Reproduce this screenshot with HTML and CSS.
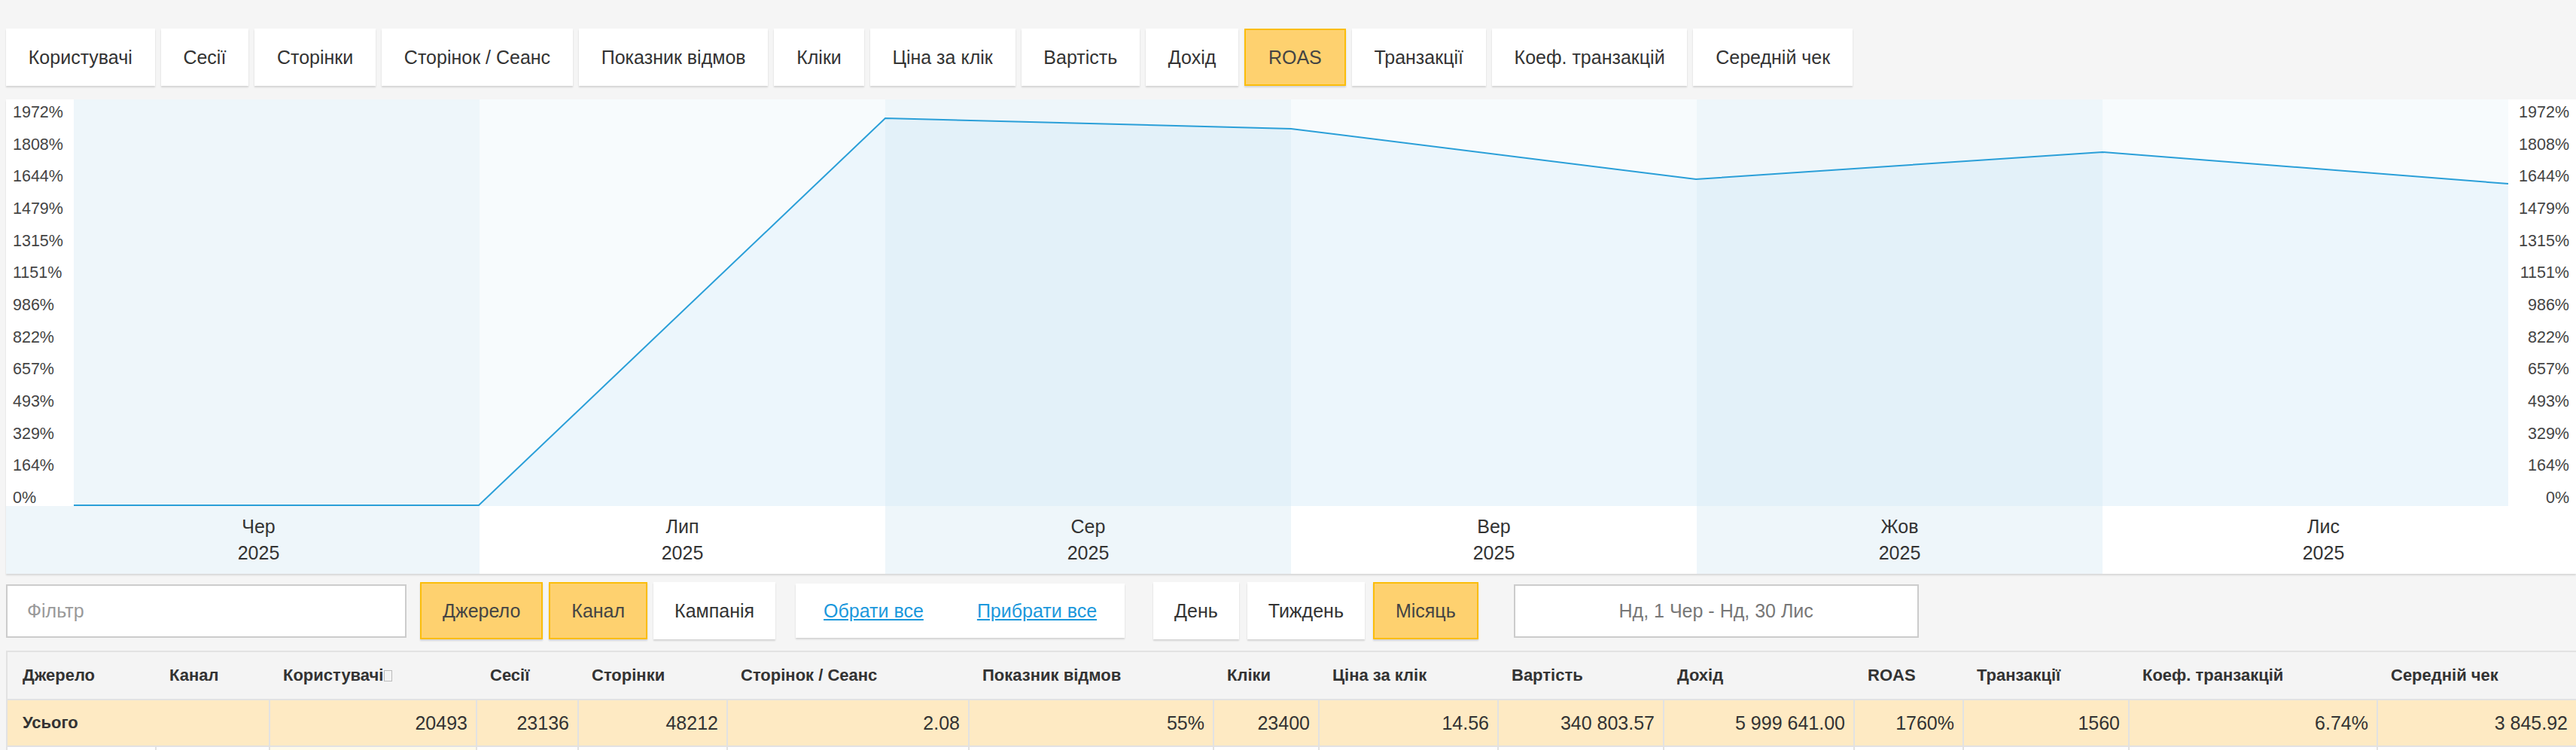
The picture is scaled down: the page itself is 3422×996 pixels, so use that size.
FILE: index.html
```html
<!DOCTYPE html>
<html lang="uk">
<head>
    <meta charset="UTF-8">
    <meta name="viewport" content="width=device-width, initial-scale=1.0">
    <title>Звіт по джерелах</title>
    <link rel="stylesheet" href="styles.css">
</head>
<body>

    <!-- Metric tabs -->
    <div class="metric-tabs">
        <button class="tab">Користувачі</button>
        <button class="tab">Сесії</button>
        <button class="tab">Сторінки</button>
        <button class="tab">Сторінок / Сеанс</button>
        <button class="tab">Показник відмов</button>
        <button class="tab">Кліки</button>
        <button class="tab">Ціна за клік</button>
        <button class="tab">Вартість</button>
        <button class="tab">Дохід</button>
        <button class="tab active">ROAS</button>
        <button class="tab">Транзакції</button>
        <button class="tab">Коеф. транзакцій</button>
        <button class="tab">Середній чек</button>
    </div>

    <!-- Chart -->
    <div class="chart">
        <div class="axis axis-left">
            <span>1972%</span><span>1808%</span><span>1644%</span><span>1479%</span><span>1315%</span>
            <span>1151%</span><span>986%</span><span>822%</span><span>657%</span><span>493%</span>
            <span>329%</span><span>164%</span><span>0%</span>
        </div>
        <div class="band odd col-1"></div>
        <div class="band col-2"></div>
        <div class="band odd col-3"></div>
        <div class="band col-4"></div>
        <div class="band odd col-5"></div>
        <div class="band col-6"></div>
        <svg class="plot-line" viewBox="0 0 3234 540" preserveAspectRatio="none">
            <polygon points="0,540 538,540 1078,25 1617,39 2155,106 2695,70 3234,112 3234,540" fill="rgba(0,150,230,0.045)"/>
            <polyline points="0,539 538,539 1078,25 1617,39 2155,106 2695,70 3234,112" fill="none" stroke="#2a9fd8" stroke-width="2" vector-effect="non-scaling-stroke"/>
        </svg>
        <div class="axis axis-right">
            <span>1972%</span><span>1808%</span><span>1644%</span><span>1479%</span><span>1315%</span>
            <span>1151%</span><span>986%</span><span>822%</span><span>657%</span><span>493%</span>
            <span>329%</span><span>164%</span><span>0%</span>
        </div>

        <div class="x-label first odd">Чер<br>2025</div>
        <div class="x-label">Лип<br>2025</div>
        <div class="x-label odd">Сер<br>2025</div>
        <div class="x-label">Вер<br>2025</div>
        <div class="x-label odd">Жов<br>2025</div>
        <div class="x-label last">Лис<br>2025</div>
    </div>

    <!-- Filters -->
    <div class="controls">
        <input class="filter-input" type="text" placeholder="Фільтр">
        <div class="btn-group">
            <button class="btn active">Джерело</button>
            <button class="btn active">Канал</button>
            <button class="btn">Кампанія</button>
        </div>
        <div class="select-links">
            <a href="#">Обрати все</a>
            <a href="#">Прибрати все</a>
        </div>
        <div class="btn-group period">
            <button class="btn">День</button>
            <button class="btn">Тиждень</button>
            <button class="btn active">Місяць</button>
        </div>
        <div class="date-range">Нд, 1 Чер - Нд, 30 Лис</div>
    </div>

    <!-- Data table -->
    <table class="report">
        <colgroup>
            <col style="width:198px"><col style="width:151px"><col style="width:275px">
            <col style="width:135px"><col style="width:198px"><col style="width:321px">
            <col style="width:325px"><col style="width:140px"><col style="width:238px">
            <col style="width:220px"><col style="width:253px"><col style="width:145px">
            <col style="width:220px"><col style="width:330px"><col style="width:265px">
        </colgroup>
        <thead>
            <tr>
                <th>Джерело</th>
                <th>Канал</th>
                <th>Користувачі<span class="sort-mark"></span></th>
                <th>Сесії</th>
                <th>Сторінки</th>
                <th>Сторінок / Сеанс</th>
                <th>Показник відмов</th>
                <th>Кліки</th>
                <th>Ціна за клік</th>
                <th>Вартість</th>
                <th>Дохід</th>
                <th>ROAS</th>
                <th>Транзакції</th>
                <th>Коеф. транзакцій</th>
                <th>Середній чек</th>
            </tr>
        </thead>
        <tbody>
            <tr class="total">
                <td class="label" colspan="2">Усього</td>
                <td>20493</td>
                <td>23136</td>
                <td>48212</td>
                <td>2.08</td>
                <td>55%</td>
                <td>23400</td>
                <td>14.56</td>
                <td>340 803.57</td>
                <td>5 999 641.00</td>
                <td>1760%</td>
                <td>1560</td>
                <td>6.74%</td>
                <td>3 845.92</td>
            </tr>
            <tr class="placeholder">
                <td></td><td></td><td class="sorted"></td><td></td><td></td>
                <td></td><td></td><td></td><td></td><td></td>
                <td></td><td></td><td></td><td></td><td></td>
            </tr>
        </tbody>
    </table>

</body>
</html>
```

FILE: styles.css
```css
body, html {
    margin: 0;
    padding: 0;
    font-family: "Liberation Sans", Arial, sans-serif;
    background-color: #f5f5f5;
    color: #333;
}

body {
    padding-left: 8px;
}

button {
    font-family: inherit;
}

/* metric tabs */
.metric-tabs {
    display: flex;
    gap: 8px;
    padding-top: 38px;
}

.tab, .btn {
    height: 76px;
    padding: 0 29.8px;
    font-size: 25px;
    color: #333;
    background-color: #fff;
    border: none;
    box-shadow: 0 2px 2px rgba(0, 0, 0, 0.14);
    cursor: pointer;
}

.btn {
    padding: 0 28px;
}

.tab.active, .btn.active {
    background-color: #fed16f;
    border: 2px solid #fbbd0a;
    color: #444;
}

/* chart */
.chart {
    display: grid;
    grid-template-columns: 90px repeat(6, 1fr) 90px;
    grid-template-rows: 540px 90px;
    width: 3414px;
    margin-top: 18px;
    background-color: #fff;
    box-shadow: 0 2px 2px rgba(0, 0, 0, 0.12);
}

.axis {
    display: flex;
    flex-direction: column;
    justify-content: space-between;
    padding-top: 6px;
    font-size: 21.5px;
    line-height: 22px;
    color: #444;
    grid-row: 1;
}

.axis-left {
    grid-column: 1;
    padding-left: 9px;
}

.axis-right {
    grid-column: 8;
    align-items: flex-end;
    padding-right: 9px;
}

.band {
    grid-row: 1;
    background-color: #f7fbfd;
}

.band.odd {
    background-color: #eef6fa;
}

.band.col-1 { grid-column: 2; }
.band.col-2 { grid-column: 3; }
.band.col-3 { grid-column: 4; }
.band.col-4 { grid-column: 5; }
.band.col-5 { grid-column: 6; }
.band.col-6 { grid-column: 7; }

.plot-line {
    grid-row: 1;
    grid-column: 2 / 8;
    width: 100%;
    height: 100%;
    display: block;
    overflow: visible;
}

.x-label {
    grid-row: 2;
    padding-top: 10px;
    font-size: 25px;
    line-height: 35px;
    text-align: center;
    color: #333;
    background-color: #fff;
}

.x-label.odd {
    background-color: #eef6fa;
}

.x-label.first {
    grid-column: 1 / 3;
    padding-left: 42px;
}

.x-label.last {
    grid-column: 7 / 9;
    padding-right: 42px;
}

/* filters */
.controls {
    display: flex;
    align-items: center;
    margin-top: 11px;
}

.filter-input {
    box-sizing: border-box;
    width: 532px;
    height: 71px;
    padding: 0 26px;
    font-family: inherit;
    font-size: 25px;
    border: 2px solid #ccc;
    background-color: #fff;
    margin-right: 18px;
}

.filter-input::placeholder {
    color: #999;
}

.btn-group {
    display: flex;
    gap: 8px;
}

.btn-group.period {
    gap: 11px;
    margin-left: 38px;
}

.select-links {
    display: flex;
    align-items: center;
    gap: 71px;
    height: 72px;
    margin-left: 27px;
    padding: 0 37px 0 37px;
    background-color: #fff;
    box-shadow: 0 2px 2px rgba(0, 0, 0, 0.14);
}

.select-links a {
    font-size: 25px;
    color: #1b98dc;
    text-decoration: underline;
}

.date-range {
    box-sizing: border-box;
    width: 538px;
    height: 71px;
    margin-left: 47px;
    border: 2px solid #ccc;
    background-color: #fff;
    font-size: 25px;
    color: #777;
    display: flex;
    align-items: center;
    justify-content: center;
}

/* table */
.report {
    width: 3414px;
    margin-top: 15px;
    border-collapse: collapse;
    table-layout: fixed;
    border-top: 2px solid #e2e2e2;
    border-left: 2px solid #e2e2e2;
}

.report th {
    height: 62px;
    padding: 0 18px;
    text-align: left;
    font-size: 22px;
    font-weight: bold;
    color: #333;
    background-color: #f4f4f4;
    border-bottom: 2px solid #e2e2e2;
    white-space: nowrap;
}

.report th:first-child {
    padding-left: 20px;
}

.sort-mark {
    display: inline-block;
    width: 9px;
    height: 13px;
    margin-left: 1px;
    border: 1.5px solid #bbb;
    vertical-align: -1px;
}

.report td {
    height: 60px;
    padding: 0 11px;
    text-align: right;
    font-size: 25px;
    color: #333;
    background-color: #fff;
    border: 2px solid #e2e2e2;
}

.report td.label {
    text-align: left;
    padding-left: 20px;
    font-size: 22px;
}

.report td.sorted {
    background-color: #fffbea;
}

.report tr.total td {
    background-color: #feeac3;
}

.report tr.total td.label {
    font-weight: bold;
}
```
